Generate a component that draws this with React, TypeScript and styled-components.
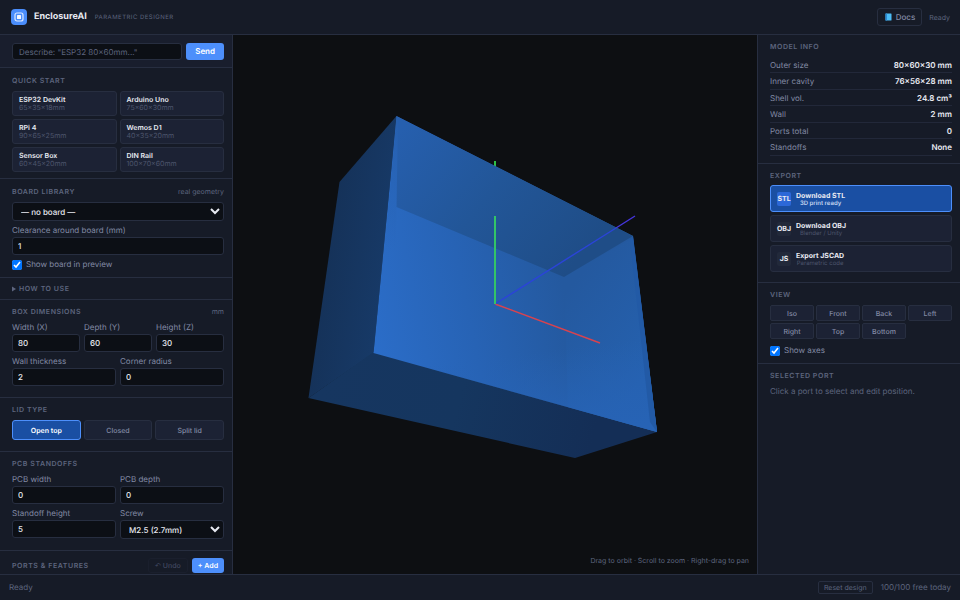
import React from "react";
import styled, { createGlobalStyle, css } from "styled-components";

const c = {
  bg: "#0d0f12",
  panel: "#161b27",
  raised: "#1c2234",
  field: "#0c0f15",
  line: "#272e40",
  text: "#e8eaf2",
  soft: "#828aa4",
  mute: "#5d657e",
  dim: "#4d556c",
  accent: "#4d8ffb",
  active: "#1a4fa3",
};

const GlobalStyle = createGlobalStyle`
  *, *::before, *::after { box-sizing: border-box; }
  body { margin: 0; background: ${c.bg}; color: ${c.text}; font: 7px/11px Inter, sans-serif; overflow: hidden; text-rendering: geometricPrecision; }
  button, input, select { font: inherit; color: inherit; margin: 0; text-rendering: inherit; }
  button { cursor: pointer; }
`;

const Shell = styled.div`
  display: grid;
  grid-template-columns: 233px minmax(0, 1fr) 203px;
  grid-template-rows: auto minmax(0, 1fr) auto;
  height: 100vh;
`;

const Header = styled.header`
  grid-column: 1 / -1;
  display: flex;
  align-items: center;
  padding: 8px 10px 8px 11px;
  border-bottom: 1px solid ${c.line};
  background: ${c.panel};
`;

const Logo = styled.svg`
  width: 16px;
  height: 16px;
  margin-right: 7px;
`;

const Brand = styled.h1`
  margin: 0 8px 0 0;
  font-size: 9px;
  line-height: 18px;
  font-weight: 700;
`;

const Tagline = styled.span`
  font-size: 6px;
  letter-spacing: 0.08em;
  color: ${c.mute};
  text-transform: uppercase;
`;

const Spacer = styled.div`
  flex: 1;
`;

const DocsLink = styled.a`
  display: flex;
  align-items: center;
  gap: 4px;
  height: 18px;
  padding: 0 6px 0 7px;
  margin-right: 7px;
  border: 1px solid ${c.line};
  border-radius: 3px;
  color: ${c.soft};
  font-size: 8px;
  font-weight: 500;
  text-decoration: none;
`;

const BookIcon = styled.svg`
  width: 7px;
  height: 8px;
`;

const Status = styled.span`
  color: ${c.mute};
`;

const Quota = styled(Status)`
  font-size: 8px;
`;

const Sidebar = styled.aside<{ $side: "left" | "right" }>`
  overflow: hidden;
  background: ${c.panel};
  ${(p) =>
    p.$side === "left"
      ? css`border-right: 1px solid ${c.line};`
      : css`border-left: 1px solid ${c.line};`}
`;

const Section = styled.section<{ $top?: number; $bottom?: number; $last?: boolean }>`
  padding: ${(p) => p.$top ?? 6}px 8px ${(p) => p.$bottom ?? 7}px 12px;
  border-bottom: ${(p) => (p.$last ? 0 : 1)}px solid ${c.line};
`;

const PromptBar = styled.form`
  display: flex;
  gap: 4px;
  padding: 8px 8px 7px 12px;
  border-bottom: 1px solid ${c.line};
  background: #191e2d;
`;

const PromptInput = styled.input`
  flex: 1;
  min-width: 0;
  height: 17px;
  padding: 0 6px;
  border: 1px solid ${c.line};
  border-radius: 3px;
  background: ${c.field};
  font-size: 8px;
  &::placeholder { color: ${c.mute}; opacity: 1; }
`;

const PrimaryButton = styled.button<{ $compact?: boolean }>`
  height: ${(p) => (p.$compact ? 15 : 17)}px;
  padding: 0 ${(p) => (p.$compact ? 6 : 9)}px;
  border: 0;
  border-radius: 3px;
  background: ${c.accent};
  color: #fff;
  font-size: ${(p) => (p.$compact ? 7 : 8)}px;
  font-weight: 600;
`;

const TitleRow = styled.div<{ $gap?: number }>`
  display: flex;
  align-items: center;
  justify-content: space-between;
  margin-bottom: ${(p) => p.$gap ?? 5}px;
`;

const titleText = css`
  margin: 0;
  font-size: 7px;
  line-height: 11px;
  font-weight: 600;
  letter-spacing: 0.08em;
  text-transform: uppercase;
  color: ${c.mute};
`;

const Title = styled.h2`
  ${titleText}
`;

const TitleNote = styled.span`
  color: ${c.mute};
`;

const HowTo = styled.details`
  padding: 5px 12px;
  border-bottom: 1px solid ${c.line};
`;

const HowToSummary = styled.summary`
  ${titleText}
  display: flex;
  align-items: center;
  gap: 3px;
  cursor: pointer;
`;

const Caret = styled.svg`
  width: 4px;
  height: 6px;
`;

const Grid = styled.div<{ $cols: number; $gap?: number }>`
  display: grid;
  grid-template-columns: repeat(${(p) => p.$cols}, minmax(0, 1fr));
  gap: ${(p) => p.$gap ?? 3}px;
`;

const PresetButton = styled.button`
  display: flex;
  flex-direction: column;
  justify-content: center;
  height: 25px;
  padding: 0 6px;
  border: 1px solid ${c.line};
  border-radius: 3px;
  background: ${c.raised};
  text-align: left;
`;

const PresetName = styled.span`
  line-height: 9px;
  font-weight: 600;
`;

const PresetSize = styled.span`
  line-height: 8px;
  color: ${c.dim};
`;

const Fields = styled.div<{ $cols: number }>`
  display: grid;
  grid-template-columns: repeat(${(p) => p.$cols}, minmax(0, 1fr));
  gap: 4px;
  margin-bottom: 4px;
`;

const FieldLabel = styled.label`
  display: flex;
  flex-direction: column;
  gap: 1px;
  color: ${c.soft};
  font-size: 8px;
`;

const control = css`
  width: 100%;
  border: 1px solid ${c.line};
  border-radius: 3px;
  background: ${c.field};
  color: ${c.text};
  font-size: 8px;
  font-weight: 500;
`;

const NumberInput = styled.input`
  ${control}
  height: 18px;
  padding: 0 5px;
`;

const Select = styled.select`
  ${control}
  display: block;
  height: 19px;
  padding: 0 0 0 4px;
`;

const CheckLabel = styled.label<{ $top?: number }>`
  display: flex;
  align-items: center;
  gap: 4px;
  margin-top: ${(p) => p.$top ?? 0}px;
  color: ${c.soft};
  font-size: 8px;
`;

const Checkbox = styled.input`
  width: 10px;
  height: 10px;
  accent-color: #0075ff;
`;

const LidButton = styled.button<{ $active?: boolean }>`
  height: 20px;
  padding: 0;
  border: 1px solid ${(p) => (p.$active ? c.accent : c.line)};
  border-radius: 3px;
  background: ${(p) => (p.$active ? c.active : c.raised)};
  color: ${(p) => (p.$active ? "#fff" : c.soft)};
  font-weight: ${(p) => (p.$active ? 600 : 500)};
`;

const PortBar = styled.div`
  display: flex;
  align-items: center;
  gap: 4px;
  padding: 7px 8px 7px 12px;
`;

const UndoButton = styled.button`
  height: 15px;
  padding: 0 6px;
  border: 1px solid #1a1f2d;
  border-radius: 3px;
  background: transparent;
  color: #414860;
  font-weight: 500;
`;

const Viewport = styled.main`
  position: relative;
  overflow: hidden;
  background: ${c.bg};
`;

const Scene = styled.svg`
  display: block;
  width: 100%;
  height: 100%;
`;

const Hint = styled.p`
  position: absolute;
  right: 8px;
  bottom: 8px;
  margin: 0;
  color: ${c.mute};
`;

const InfoTable = styled.table`
  width: 100%;
  height: 99px;
  border-collapse: collapse;
  font-size: 8px;
  th, td { padding: 1px 0 0; border-bottom: 1px solid #222839; }
  th { text-align: left; font-weight: 400; color: ${c.soft}; }
  td { text-align: right; font-weight: 600; }
`;

const ExportList = styled.div`
  display: flex;
  flex-direction: column;
  gap: 3px;
  margin-bottom: 3px;
`;

const ExportButton = styled.button<{ $primary?: boolean }>`
  display: flex;
  align-items: center;
  gap: 5px;
  height: 27px;
  padding: 0 6px;
  border: 1px solid ${(p) => (p.$primary ? c.accent : c.line)};
  border-radius: 3px;
  background: ${(p) => (p.$primary ? c.active : c.raised)};
`;

const ExportBadge = styled.span<{ $primary?: boolean }>`
  display: flex;
  align-items: center;
  justify-content: center;
  width: 14px;
  height: 14px;
  border-radius: 2px;
  background: ${(p) => (p.$primary ? "#2c68d8" : "#22293a")};
  font-weight: 700;
`;

const ExportText = styled.span`
  display: flex;
  flex-direction: column;
  align-items: center;
`;

const ExportName = styled.span`
  line-height: 9px;
  font-weight: 700;
`;

const ExportNote = styled.span<{ $primary?: boolean }>`
  font-size: 6px;
  line-height: 7px;
  font-weight: ${(p) => (p.$primary ? 600 : 400)};
  color: ${(p) => (p.$primary ? "#c3d3ef" : c.dim)};
`;

const ViewButton = styled.button`
  height: 16px;
  padding: 0;
  border: 1px solid ${c.line};
  border-radius: 2px;
  background: ${c.raised};
  color: ${c.soft};
  font-weight: 500;
`;

const Empty = styled.p`
  margin: 0;
  font-size: 8px;
  color: ${c.mute};
`;

const Footer = styled.footer`
  grid-column: 1 / -1;
  display: flex;
  align-items: center;
  gap: 8px;
  padding: 6px 9px;
  border-top: 1px solid ${c.line};
  background: ${c.panel};
`;

const ResetButton = styled.button`
  height: 13px;
  padding: 0 5px;
  border: 1px solid ${c.line};
  border-radius: 2px;
  background: transparent;
  color: ${c.mute};
  line-height: 9px;
`;

const presets = [
  ["ESP32 DevKit", "65×35×18mm"],
  ["Arduino Uno", "75×60×30mm"],
  ["RPi 4", "90×65×25mm"],
  ["Wemos D1", "40×35×20mm"],
  ["Sensor Box", "60×45×20mm"],
  ["DIN Rail", "100×70×60mm"],
];

const info = [
  ["Outer size", "80×60×30 mm"],
  ["Inner cavity", "76×56×28 mm"],
  ["Shell vol.", "24.8 cm³"],
  ["Wall", "2 mm"],
  ["Ports total", "0"],
  ["Standoffs", "None"],
];

const exportsList = [
  { badge: "STL", name: "Download STL", note: "3D print ready", primary: true },
  { badge: "OBJ", name: "Download OBJ", note: "Blender / Unity" },
  { badge: "JS", name: "Export JSCAD", note: "Parametric code" },
];

const views = ["Iso", "Front", "Back", "Left", "Right", "Top", "Bottom"];

function NumberField({ label, value }: { label: string; value: number }) {
  return (
    <FieldLabel>
      {label}
      <NumberInput type="number" defaultValue={value} />
    </FieldLabel>
  );
}

function EnclosureScene() {
  return (
    <Scene viewBox="233 35 524 539" role="img" aria-label="Enclosure preview">
      <defs>
        <linearGradient id="floor" gradientUnits="userSpaceOnUse" x1="373" y1="340" x2="566" y2="300">
          <stop offset="0" stopColor="#2b6dc8" />
          <stop offset="0.5" stopColor="#2763b5" />
          <stop offset="1" stopColor="#24599f" />
        </linearGradient>
        <linearGradient id="wallTop" gradientUnits="userSpaceOnUse" x1="400" y1="130" x2="570" y2="270">
          <stop offset="0" stopColor="#265fae" />
          <stop offset="0.5" stopColor="#225698" />
          <stop offset="1" stopColor="#1f4d87" />
        </linearGradient>
        <linearGradient id="wallLeft" gradientUnits="userSpaceOnUse" x1="396" y1="116" x2="385" y2="250">
          <stop offset="0" stopColor="#265fae" />
          <stop offset="1" stopColor="#2865b9" stopOpacity="0" />
        </linearGradient>
        <linearGradient id="wallRight" gradientUnits="userSpaceOnUse" x1="560" y1="300" x2="650" y2="370">
          <stop offset="0" stopColor="#24599f" />
          <stop offset="1" stopColor="#2561af" />
        </linearGradient>
        <linearGradient id="wallFront" gradientUnits="userSpaceOnUse" x1="550" y1="350" x2="560" y2="435">
          <stop offset="0" stopColor="#2763b5" stopOpacity="0" />
          <stop offset="1" stopColor="#2763b5" />
        </linearGradient>
        <linearGradient id="sideLeft" gradientUnits="userSpaceOnUse" x1="320" y1="300" x2="385" y2="310">
          <stop offset="0" stopColor="#153259" />
          <stop offset="1" stopColor="#173a68" />
        </linearGradient>
        <linearGradient id="sideBottom" gradientUnits="userSpaceOnUse" x1="320" y1="380" x2="590" y2="450">
          <stop offset="0" stopColor="#163660" />
          <stop offset="0.5" stopColor="#15365f" />
          <stop offset="1" stopColor="#142e56" />
        </linearGradient>
      </defs>
      <path d="M495 161V304" stroke="#2fbf45" strokeWidth="2" />
      <polygon points="396.5,116 339.5,182 308.5,398 373.5,353" fill="url(#sideLeft)" />
      <polygon points="308.5,398 373.5,352 657,432 575,458" fill="url(#sideBottom)" />
      <polygon points="396.5,116 633,236 657,432 373.5,353" fill="url(#floor)" />
      <polygon points="564,277 633,238 657,432 568,407" fill="url(#wallRight)" />
      <polygon points="373.5,353 564,277 633,238 657,432" fill="url(#wallFront)" />
      <polygon points="396.5,116 399,118 396.5,207 396,250 385,250" fill="url(#wallLeft)" />
      <polygon points="398,117 633,236 564,277 396.5,207" fill="url(#wallTop)" />
      <polygon points="633,236 657,432 650,422 630,240" fill="#225aa6" />
      <path d="M495 304L600 343" stroke="#d8434f" strokeWidth="1.4" />
      <path d="M495 304L616 228" stroke="#2b44d8" strokeWidth="1.4" />
      <path d="M616 228L635 216" stroke="#4636e0" strokeWidth="1.4" />
      <path d="M495 216V304" stroke="#33c467" strokeWidth="2" />
    </Scene>
  );
}

export default function App() {
  return (
    <>
      <GlobalStyle />
      <Shell>
        <Header>
          <Logo viewBox="0 0 16 16" aria-hidden="true">
            <rect width="16" height="16" rx="4" fill="#4a8dfb" />
            <rect x="4" y="4" width="8" height="8" rx="2" fill="none" stroke="#dce9ff" strokeWidth="1.2" />
            <rect x="6" y="6" width="4" height="4" rx="0.6" fill="#f3f7ff" />
          </Logo>
          <Brand>EnclosureAI</Brand>
          <Tagline>Parametric Designer</Tagline>
          <Spacer />
          <DocsLink href="#docs">
            <BookIcon viewBox="0 0 7 8" aria-hidden="true">
              <rect x="0.5" y="0.5" width="6" height="7" rx="0.5" fill="#4cbcf5" />
              <rect x="0.5" y="0.5" width="1.5" height="7" fill="#2b87d0" />
            </BookIcon>
            Docs
          </DocsLink>
          <Status>Ready</Status>
        </Header>

        <Sidebar $side="left">
          <PromptBar onSubmit={(e) => e.preventDefault()}>
            <PromptInput aria-label="Describe enclosure" placeholder={'Describe: "ESP32 80×60mm..."'} />
            <PrimaryButton type="submit">Send</PrimaryButton>
          </PromptBar>

          <Section $top={7} $bottom={6}>
            <TitleRow>
              <Title>Quick Start</Title>
            </TitleRow>
            <Grid $cols={2}>
              {presets.map(([name, size]) => (
                <PresetButton key={name} type="button">
                  <PresetName>{name}</PresetName>
                  <PresetSize>{size}</PresetSize>
                </PresetButton>
              ))}
            </Grid>
          </Section>

          <Section $top={7}>
            <TitleRow>
              <Title>Board Library</Title>
              <TitleNote>real geometry</TitleNote>
            </TitleRow>
            <Fields $cols={1}>
              <Select aria-label="Board">
                <option>— no board —</option>
              </Select>
              <NumberField label="Clearance around board (mm)" value={1} />
            </Fields>
            <CheckLabel>
              <Checkbox type="checkbox" defaultChecked />
              Show board in preview
            </CheckLabel>
          </Section>

          <HowTo>
            <HowToSummary>
              <Caret viewBox="0 0 4 6" aria-hidden="true">
                <path d="M0 0.5L4 3L0 5.5Z" fill="currentColor" />
              </Caret>
              How to use
            </HowToSummary>
          </HowTo>

          <Section>
            <TitleRow>
              <Title>Box Dimensions</Title>
              <TitleNote>mm</TitleNote>
            </TitleRow>
            <Fields $cols={3}>
              <NumberField label="Width (X)" value={80} />
              <NumberField label="Depth (Y)" value={60} />
              <NumberField label="Height (Z)" value={30} />
            </Fields>
            <Fields $cols={2}>
              <NumberField label="Wall thickness" value={2} />
              <NumberField label="Corner radius" value={0} />
            </Fields>
          </Section>

          <Section $bottom={11}>
            <TitleRow>
              <Title>Lid Type</Title>
            </TitleRow>
            <Grid $cols={3}>
              <LidButton type="button" $active>Open top</LidButton>
              <LidButton type="button">Closed</LidButton>
              <LidButton type="button">Split lid</LidButton>
            </Grid>
          </Section>

          <Section>
            <TitleRow>
              <Title>PCB Standoffs</Title>
            </TitleRow>
            <Fields $cols={2}>
              <NumberField label="PCB width" value={0} />
              <NumberField label="PCB depth" value={0} />
            </Fields>
            <Fields $cols={2}>
              <NumberField label="Standoff height" value={5} />
              <FieldLabel>
                Screw
                <Select>
                  <option>M2.5 (2.7mm)</option>
                </Select>
              </FieldLabel>
            </Fields>
          </Section>

          <PortBar>
            <Title>Ports &amp; Features</Title>
            <Spacer />
            <UndoButton type="button">↶ Undo</UndoButton>
            <PrimaryButton type="button" $compact>+ Add</PrimaryButton>
          </PortBar>
        </Sidebar>

        <Viewport>
          <EnclosureScene />
          <Hint>Drag to orbit · Scroll to zoom · Right-drag to pan</Hint>
        </Viewport>

        <Sidebar $side="right">
          <Section>
            <TitleRow>
              <Title>Model Info</Title>
            </TitleRow>
            <InfoTable>
              <tbody>
                {info.map(([label, value]) => (
                  <tr key={label}>
                    <th scope="row">{label}</th>
                    <td>{value}</td>
                  </tr>
                ))}
              </tbody>
            </InfoTable>
          </Section>

          <Section>
            <TitleRow $gap={4}>
              <Title>Export</Title>
            </TitleRow>
            <ExportList>
              {exportsList.map((e) => (
                <ExportButton key={e.badge} type="button" $primary={e.primary}>
                  <ExportBadge $primary={e.primary}>{e.badge}</ExportBadge>
                  <ExportText>
                    <ExportName>{e.name}</ExportName>
                    <ExportNote $primary={e.primary}>{e.note}</ExportNote>
                  </ExportText>
                </ExportButton>
              ))}
            </ExportList>
          </Section>

          <Section>
            <TitleRow>
              <Title>View</Title>
            </TitleRow>
            <Grid $cols={4} $gap={2}>
              {views.map((v) => (
                <ViewButton key={v} type="button">{v}</ViewButton>
              ))}
            </Grid>
            <CheckLabel $top={6}>
              <Checkbox type="checkbox" defaultChecked />
              Show axes
            </CheckLabel>
          </Section>

          <Section $last>
            <TitleRow>
              <Title>Selected Port</Title>
            </TitleRow>
            <Empty>Click a port to select and edit position.</Empty>
          </Section>
        </Sidebar>

        <Footer>
          <Quota>Ready</Quota>
          <Spacer />
          <ResetButton type="button">Reset design</ResetButton>
          <Quota>100/100 free today</Quota>
        </Footer>
      </Shell>
    </>
  );
}
